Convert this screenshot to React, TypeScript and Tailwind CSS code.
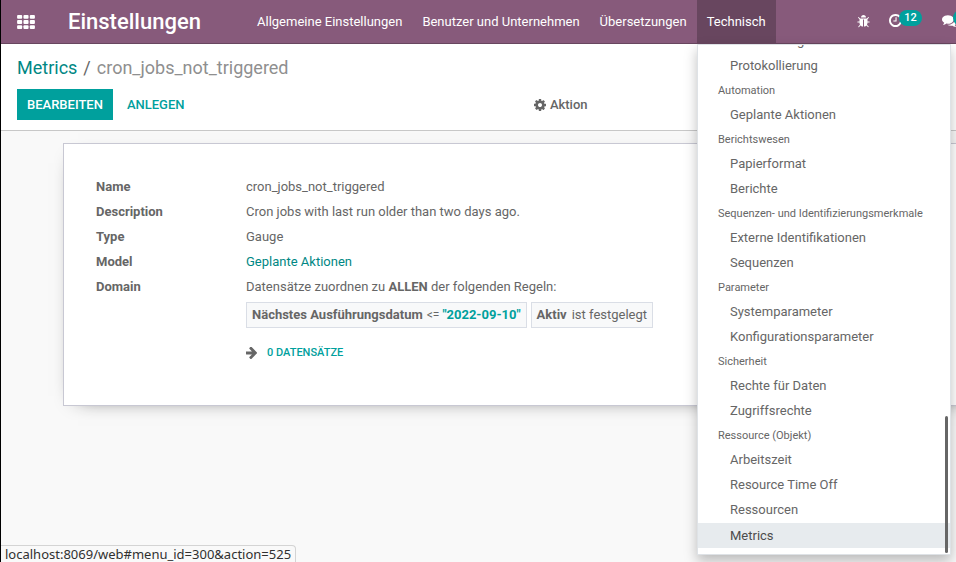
import React from "react";

type IconProps = { d: string; viewBox: string; className?: string };

function Icon({ d, viewBox, className }: IconProps) {
  return (
    <svg viewBox={viewBox} className={className} fill="currentColor" aria-hidden="true">
      <path d={d} />
    </svg>
  );
}

const COG =
  "M1024 896q0-106-75-181t-181-75-181 75-75 181 75 181 181 75 181-75 75-181zm512-109v222q0 12-8 23t-20 13l-185 28q-19 54-39 91 35 50 107 138 10 12 10 25t-9 23q-27 37-99 108t-94 71q-12 0-26-9l-138-108q-44 23-91 38-16 136-29 186-7 28-36 28h-222q-14 0-24.5-8.5t-11.5-21.5l-28-184q-49-16-90-37l-141 107q-10 9-25 9-14 0-25-11-126-114-165-168-7-10-7-23 0-12 8-23 15-21 51-66.5t54-70.5q-27-50-41-99l-183-27q-13-2-21-12.5t-8-23.5v-222q0-12 8-23t19-13l186-28q14-46 39-92-40-57-107-138-10-12-10-24 0-10 9-23 26-36 98.5-107.5t94.5-71.5q13 0 26 10l138 107q44-23 91-38 16-136 29-186 7-28 36-28h222q14 0 24.5 8.5t11.5 21.5l28 184q49 16 90 37l142-107q9-9 24-9 13 0 25 10 129 119 165 170 7 8 7 22 0 12-8 23-15 21-51 66.5t-54 70.5q26 50 41 98l183 28q13 2 21 12.5t8 23.5z";
const ARROW =
  "M1472 896q0 54-37 91l-651 651q-39 37-91 37-51 0-90-37l-75-75q-38-38-38-91t38-91l293-293h-704q-52 0-84.5-37.5t-32.5-90.5v-128q0-53 32.5-90.5t84.5-37.5h704l-293-294q-38-36-38-90t38-90l75-75q38-38 90-38 53 0 91 38l651 651q37 35 37 90z";
const BUG =
  "M1632 1024q0 26-19 45t-45 19h-224q0 171-67 290l208 209q19 19 19 45t-19 45q-18 19-45 19t-45-19l-198-197q-5 5-15 13t-42 28.5-65 36.5-82 29-97 13v-896h-128v896q-51 0-101.5-13.5t-87-33-66-39-43.5-32.5l-15-14-183 207q-20 21-48 21-24 0-43-16-19-18-20.5-44.5t15.5-46.5l202-227q-58-114-58-274h-224q-26 0-45-19t-19-45 19-45 45-19h224v-294l-173-173q-19-19-19-45t19-45 45-19 45 19l173 173h844l173-173q19-19 45-19t45 19 19 45-19 45l-173 173v294h224q26 0 45 19t19 45zm-480-576h-640q0-133 93.5-226.5t226.5-93.5 226.5 93.5 93.5 226.5z";
const CLOCK =
  "M896 544v448q0 14-9 23t-23 9h-320q-14 0-23-9t-9-23v-64q0-14 9-23t23-9h224v-352q0-14 9-23t23-9h64q14 0 23 9t9 23zm416 352q0-148-73-273t-198-198-273-73-273 73-198 198-73 273 73 273 198 198 273 73 273-73 198-198 73-273zm224 0q0 209-103 385.5t-279.5 279.5-385.5 103-385.5-103-279.5-279.5-103-385.5 103-385.5 279.5-279.5 385.5-103 385.5 103 279.5 279.5 103 385.5z";
const COMMENTS =
  "M1408 768q0 139-94 257t-256.5 186.5-353.5 68.5q-86 0-176-16-124 88-278 128-36 9-86 16h-3q-11 0-20.5-8t-11.5-21q-1-3-1-6.5t.5-6.5 2-6l2.5-5 3.5-5.5 4-5 4.5-5 4-4.5q5-6 23-25t26-29.5 22.5-29 25-38.5 20.5-44q-124-72-195-177t-71-224q0-139 94-257t256.5-186.5 353.5-68.5 353.5 68.5 256.5 186.5 94 257zm384 256q0 120-71 224.5t-195 176.5q10 24 20.5 44t25 38.5 22.5 29 26 29.5 23 25q1 1 4 4.5t4.5 5 4 5 3.5 5.5l2.5 5 2 6 .5 6.5-1 6.5q-3 14-13 22t-22 7q-50-7-86-16-154-40-278-128-90 16-176 16-271 0-472-132 58 4 88 4 161 0 309-45t264-129q125-92 192-212t67-254q0-77-23-152 129 71 204 178t75 230z";

function AppsIcon() {
  return (
    <svg viewBox="0 0 1792 1408" className="h-[14px] w-[18px]" fill="currentColor" aria-hidden="true">
      {[0, 512, 1024].map((y) =>
        [0, 640, 1280].map((x) => <rect key={`${x}-${y}`} x={x} y={y} width="512" height="384" rx="96" />),
      )}
    </svg>
  );
}

const menu = [
  { title: "Automation", items: ["Geplante Aktionen"] },
  { title: "Berichtswesen", items: ["Papierformat", "Berichte"] },
  { title: "Sequenzen- und Identifizierungsmerkmale", items: ["Externe Identifikationen", "Sequenzen"] },
  { title: "Parameter", items: ["Systemparameter", "Konfigurationsparameter"] },
  { title: "Sicherheit", items: ["Rechte für Daten", "Zugriffsrechte"] },
  { title: "Ressource (Objekt)", items: ["Arbeitszeit", "Resource Time Off", "Ressourcen", "Metrics"] },
];

function MenuItem({ label }: { label: string }) {
  const active = label === "Metrics";
  return (
    <a
      href="#"
      className={
        active
          ? "block h-[25px] shrink-0 bg-[#e7ebee] pl-8 leading-[25px] text-[#4c4c4c]"
          : "block h-[25px] shrink-0 pl-8 leading-[23px] text-[#666666]"
      }
    >
      {label}
    </a>
  );
}

function TechnicalMenu() {
  return (
    <div className="absolute top-11 right-[5px] bottom-[7px] z-10 flex w-[254px] flex-col justify-end overflow-hidden border border-[#dee2e6] bg-white pb-[6px] shadow-[0_6px_12px_rgba(0,0,0,0.25)]">
      <MenuItem label="Bezeichnung" />
      <MenuItem label="Protokollierung" />
      {menu.map((group) => (
        <React.Fragment key={group.title}>
          <div className="h-6 shrink-0 pl-5 text-[11px] leading-6 whitespace-nowrap text-[#666666]">{group.title}</div>
          {group.items.map((item) => (
            <MenuItem key={item} label={item} />
          ))}
        </React.Fragment>
      ))}
      <div className="absolute right-[2px] bottom-px h-[137px] w-[3px] rounded-full bg-[#666666]" />
    </div>
  );
}

function Navbar() {
  return (
    <header className="flex h-11 shrink-0 items-stretch overflow-hidden border-b border-[#68465f] bg-[#875a7b] text-white">
      <button type="button" aria-label="Apps" className="flex w-[50px] items-center pl-4">
        <AppsIcon />
      </button>
      <a href="#" className="flex w-[196px] items-center pl-[17px] text-[22px] font-medium">
        Einstellungen
      </a>
      <nav className="flex shrink-0 items-stretch">
        <a href="#" className="flex items-center px-[10px]">Allgemeine Einstellungen</a>
        <a href="#" className="flex items-center px-[10px]">Benutzer und Unternehmen</a>
        <a href="#" className="flex items-center px-[10px]">Übersetzungen</a>
        <a href="#" className="flex items-center bg-[#68465f] px-[10px]">Technisch</a>
      </nav>
      <div className="ml-auto flex h-[41px] shrink-0 items-center">
        <button type="button" aria-label="Debug" className="mr-[19px]">
          <Icon d={BUG} viewBox="0 0 1664 1792" className="h-[14px] w-[13px]" />
        </button>
        <button type="button" aria-label="Aktivitäten" className="relative mr-10">
          <Icon d={CLOCK} viewBox="0 128 1536 1536" className="size-[13px]" />
          <span className="absolute -top-1 left-[10px] flex h-4 w-[23px] items-center justify-center rounded-full bg-[#00a09d] text-[11px] font-medium">
            12
          </span>
        </button>
        <button type="button" aria-label="Nachrichten" className="relative w-[14px]">
          <Icon d={COMMENTS} viewBox="0 128 1792 1536" className="h-[13px] w-[15px] max-w-none" />
          <span className="absolute -top-1 left-[11px] h-4 w-5 rounded-full bg-[#00a09d]" />
        </button>
      </div>
    </header>
  );
}

function Row({ label, children }: { label: string; children: React.ReactNode }) {
  return (
    <div className="flex">
      <dt className="w-[150px] shrink-0 font-bold">{label}</dt>
      <dd>{children}</dd>
    </div>
  );
}

export default function App() {
  return (
    <div className="relative flex h-screen flex-col overflow-hidden border-l border-black bg-[#f9f9f9] font-[Roboto,sans-serif] text-[13px] text-[#666666]">
      <Navbar />
      <TechnicalMenu />

      <section className="shrink-0 border-b border-[#c8c8c8] bg-white px-4 pt-[11px] pb-[10px]">
        <div className="flex h-6 items-center text-[18px]">
          <a href="#" className="text-[#008784]">Metrics</a>
          <span className="px-[6px]">/</span>
          <span className="text-[#8f8f8f]">cron_jobs_not_triggered</span>
        </div>
        <div className="mt-[10px] flex h-[31px] items-center">
          <div className="flex h-full w-[56%]">
            <button type="button" className="bg-[#00a09d] px-[10px] font-medium text-white">BEARBEITEN</button>
            <button type="button" className="px-[14px] font-medium text-[#00a09d]">ANLEGEN</button>
          </div>
          <button type="button" className="flex items-center gap-1 font-medium">
            <Icon d={COG} viewBox="0 128 1536 1536" className="size-3" />
            Aktion
          </button>
        </div>
      </section>

      <main className="-mr-8 pt-3 pl-[62px]">
        <article className="h-[263px] border border-[#c8c8d3] bg-white pt-[33px] pl-8 shadow-[0_5px_20px_-15px_rgba(0,0,0,0.9)]">
          <dl className="flex flex-col gap-[5px] leading-5">
            <Row label="Name">cron_jobs_not_triggered</Row>
            <Row label="Description">Cron jobs with last run older than two days ago.</Row>
            <Row label="Type">Gauge</Row>
            <Row label="Model"><a href="#" className="text-[#008784]">Geplante Aktionen</a></Row>
            <Row label="Domain">
              Datensätze zuordnen zu <b>ALLEN</b> der folgenden Regeln:
              <div className="mt-[5px] flex gap-1">
                <span className="flex h-[26px] items-center border border-[#dadee6] bg-[#f8f9fa] px-[5px]">
                  <b>Nächstes Ausführungsdatum</b>
                  <small className="mr-[3px] ml-1 text-[12px]">&lt;=</small>
                  <b className="text-[#00a09d]">"2022-09-10"</b>
                </span>
                <span className="flex h-[26px] items-center border border-[#dadee6] bg-[#f8f9fa] px-[5px]">
                  <b className="mr-[5px]">Aktiv</b>
                  ist festgelegt
                </span>
              </div>
              <button type="button" className="mt-[15px] flex items-center gap-[10px] text-[11px] font-medium text-[#00a09d]">
                <Icon d={ARROW} viewBox="64 140 1408 1536" className="h-3 w-[11px] text-[#666666]" />
                0 DATENSÄTZE
              </button>
            </Row>
          </dl>
        </article>
      </main>

      <div className="absolute bottom-0 left-0 rounded-tr border-t border-r border-[#d4d4d4] bg-[#f9f9f9] px-1 font-['Noto_Sans',sans-serif] text-[13px] leading-4 text-[#303030]">
        localhost:8069/web#menu_id=300&amp;action=525
      </div>
    </div>
  );
}
